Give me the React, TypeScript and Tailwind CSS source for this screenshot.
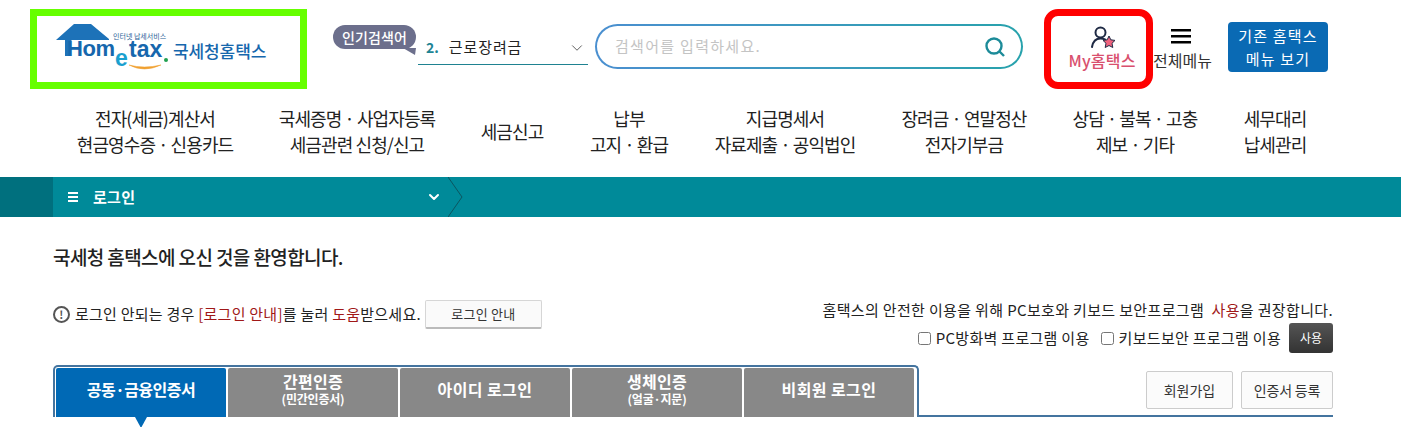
import { ChevronDown } from "lucide-react"

const font = "font-['Noto_Sans_CJK_KR','Noto_Sans',sans-serif]"

const navItems = [
  { lines: ["전자(세금)계산서", "현금영수증 · 신용카드"], w: "w-[202px]" },
  { lines: ["국세증명 · 사업자등록", "세금관련 신청/신고"], w: "w-[202px]" },
  { lines: ["세금신고"], w: "w-[108px]" },
  { lines: ["납부", "고지 · 환급"], w: "w-[126px]" },
  { lines: ["지급명세서", "자료제출 · 공익법인"], w: "w-[186px]" },
  { lines: ["장려금 · 연말정산", "전자기부금"], w: "w-[172px]" },
  { lines: ["상담 · 불복 · 고충", "제보 · 기타"], w: "w-[170px]" },
  { lines: ["세무대리", "납세관리"], w: "w-[110px]" },
]

const tabs = [
  { title: "공동·금융인증서", active: true, spacing: "tracking-[-0.5px]" },
  { title: "간편인증", sub: "(민간인증서)", spacing: "tracking-[0.3px]" },
  { title: "아이디 로그인", spacing: "tracking-[0.4px]" },
  { title: "생체인증", sub: "(얼굴·지문)", spacing: "tracking-[0.3px]" },
  { title: "비회원 로그인", spacing: "tracking-[0.4px]" },
]

function Logo() {
  return (
    <div className="flex h-20 w-[277px] shrink-0 items-center border-[7px] border-[#66ff00] bg-white">
      <div className="relative ml-[19px] h-[54px] w-[220px]">
        <svg className="absolute left-0 top-[2px]" width="54" height="32" viewBox="0 0 54 32">
          <path d="M0 16 L18 0 L35 0 L53 15 L53 16 L16 16 L14 18 L14 32 L9 32 L9 16 Z" fill="#1d72b8" />
        </svg>
        <span className="absolute left-[57px] top-[11px] text-[7px] leading-none text-[#2b5f97]">인터넷 납세서비스</span>
        <span className="absolute left-[11px] top-[15px] font-['Liberation_Sans',sans-serif] text-[22px] font-bold leading-[24px] tracking-[-0.4px] text-[#1667ad]">Hom</span>
        <span className="absolute left-[59px] top-[24px] font-['Liberation_Sans',sans-serif] text-[23px] font-bold leading-[24px] text-[#1aa0cf]">e</span>
        <span className="absolute left-[73px] top-[15px] font-['Liberation_Sans',sans-serif] text-[23px] font-bold leading-[24px] text-[#1667ad]">tax</span>
        <span className="absolute left-[108px] top-[36px] h-1 w-1 rounded-full bg-[#20a050]" />
        <svg className="absolute left-[72px] top-[42px]" width="34" height="8" viewBox="0 0 34 8">
          <path d="M1 1 Q16 9 33 1 Q16 5 1 1 Z" fill="#f0a030" stroke="#f0a030" strokeWidth="0.5" />
        </svg>
        <span className="absolute left-[117px] top-[17px] text-[17px] font-medium leading-[24px] tracking-[-0.1px] text-[#1667ad]">국세청홈택스</span>
      </div>
    </div>
  )
}

function Header() {
  return (
    <header className="flex h-[98px] items-start pl-[30px] pt-[9px]">
      <Logo />
      <div className="relative ml-[26px] mt-4 h-[28px] w-[85px] shrink-0">
        <div className="flex h-[24px] w-[83px] items-center justify-center rounded-[12px] bg-[#6c6f8c] text-[14px] font-medium leading-none tracking-[0.1px] text-white">인기검색어</div>
        <svg className="absolute left-[70px] top-[23px]" width="13" height="7" viewBox="0 0 13 7">
          <path d="M0 0 L13 0 L12 7 Z" fill="#6c6f8c" />
        </svg>
      </div>
      <div className="mt-[22px] flex h-[34px] w-[170px] shrink-0 items-center border-b border-[#1f8291] pl-2 pr-[2px] text-[15px] text-[#222]">
        <b className="mr-[10px] text-[14px] text-[#1d8494]">2.</b>
        <span className="tracking-[0.9px]">근로장려금</span>
        <ChevronDown className="ml-auto h-[18px] w-[18px] text-[#555]" strokeWidth={1.25} />
      </div>
      <div className="ml-[7px] mt-[15px] h-[45px] w-[428px] shrink-0 rounded-full bg-gradient-to-r from-[#4a8fd0] to-[#27a2ac] p-[2px]">
        <div className="flex h-full items-center rounded-full bg-white pl-[18px] pr-[15px]">
          <span className="text-[15px] tracking-[1.3px] text-[#c4c4c4]">검색어를 입력하세요.</span>
          <svg className="ml-auto" width="22" height="22" viewBox="0 0 22 22" fill="none" stroke="#1c8b99">
            <circle cx="10" cy="10" r="7.5" strokeWidth="2.4" />
            <path d="M15.5 15.5 L20 20" strokeWidth="2.4" />
          </svg>
        </div>
      </div>
      <div className="ml-[21px] flex h-20 w-[109px] shrink-0 flex-col items-center rounded-[14px] border-[7px] border-[#ff0000] bg-white pt-[10px]">
        <svg width="32" height="24" viewBox="0 0 32 24" fill="none">
          <circle cx="17.5" cy="6.5" r="5" stroke="#1f2a44" strokeWidth="2" />
          <path d="M9 21 C10 15 13.5 12.5 17.5 12.5 C19.5 12.5 21 13 22 13.5" stroke="#1f2a44" strokeWidth="2" strokeLinecap="round" />
          <path d="M27 10 L28.8 13.8 L33 14.4 L30 17.3 L30.8 21.5 L27 19.5 L23.2 21.5 L24 17.3 L21 14.4 L25.2 13.8 Z" transform="translate(-1 0)" fill="#f0637e" stroke="#1f2a44" strokeWidth="1" />
        </svg>
        <span className="ml-[7px] text-[16px] font-medium leading-[20px] tracking-[0.2px] text-[#d9506e]">My홈택스</span>
      </div>
      <div className="flex w-[59px] shrink-0 flex-col items-center pt-[20px]">
        <svg className="mr-[3px]" width="20" height="15" viewBox="0 0 20 15" fill="#000">
          <rect y="0" width="20" height="2.5" />
          <rect y="6" width="20" height="2.5" />
          <rect y="12" width="20" height="2.5" />
        </svg>
        <span className="mt-[6px] whitespace-nowrap text-[16px] leading-[20px] text-[#333]">전체메뉴</span>
      </div>
      <div className="ml-4 mt-[13px] flex h-[50px] w-[100px] shrink-0 flex-col items-center justify-center rounded-[4px] bg-[#0a6ab4] text-[15px] leading-[23px] tracking-[1.2px] text-white">
        <span>기존 홈택스</span>
        <span>메뉴 보기</span>
      </div>
    </header>
  )
}

function Nav() {
  return (
    <nav className="flex h-[79px] items-center pb-[13px] pl-[54px]">
      {navItems.map((item) => (
        <div key={item.lines[0]} className={`${item.w} shrink-0 whitespace-nowrap text-center text-[18px] leading-[26px] tracking-[-0.9px] text-[#222]`}>
          {item.lines.map((line) => (
            <div key={line}>{line}</div>
          ))}
        </div>
      ))}
    </nav>
  )
}

function LocationBar() {
  return (
    <div className="flex h-10 bg-[#008a99]">
      <div className="w-[53px] bg-[#00707e]" />
      <div className="flex w-[395px] items-center pl-[15px] pr-[6px] text-white">
        <span className="flex w-[10px] flex-col gap-[2px]">
          <i className="h-[2px] bg-white" />
          <i className="h-[2px] bg-white" />
          <i className="h-[2px] bg-white" />
        </span>
        <span className="ml-[15px] text-[15px] font-bold tracking-[0.3px]">로그인</span>
        <ChevronDown className="ml-auto h-4 w-4" strokeWidth={3} />
      </div>
      <svg width="15" height="40" viewBox="0 0 15 40" fill="none">
        <path d="M0 0 L14 20 L0 40" stroke="#0b5560" strokeWidth="1" />
      </svg>
    </div>
  )
}

function Notice() {
  return (
    <div className="mt-[29px] flex h-[53px] items-start justify-between">
      <div className="flex items-center text-[15px] tracking-[0.25px] text-[#222]">
        <span className="mr-[5px] flex h-[17px] w-[17px] items-center justify-center rounded-full border-2 border-[#555] text-[11px] font-bold leading-none text-[#555]">!</span>
        <span>로그인 안되는 경우 <span className="text-[#a01818]">[로그인 안내]</span>를 눌러 <span className="text-[#a01818]">도움</span>받으세요.</span>
        <button className="ml-[4px] h-[29px] w-[117px] rounded-[2px] border border-[#d6d6d6] border-b-2 border-b-[#bbb] bg-[#fafafa] text-[13px] text-[#333]">로그인 안내</button>
      </div>
      <div className="flex flex-col items-end text-[15px] text-[#222]">
        <div className="h-[23px] leading-[20px] tracking-[0.35px]">홈택스의 안전한 이용을 위해 PC보호와 키보드 보안프로그램 &nbsp;<span className="text-[#a01818]">사용</span>을 권장합니다.</div>
        <div className="flex items-center tracking-[0.3px]">
          <input type="checkbox" className="mr-[5px] h-[13px] w-[13px]" readOnly />
          <span>PC방화벽 프로그램 이용</span>
          <input type="checkbox" className="ml-[11px] mr-[5px] h-[13px] w-[13px]" readOnly />
          <span>키보드보안 프로그램 이용</span>
          <button className="ml-[8px] h-[30px] w-11 rounded-[3px] bg-gradient-to-b from-[#555] to-[#333] text-[12px] tracking-normal text-white">사용</button>
        </div>
      </div>
    </div>
  )
}

function Tabs() {
  return (
    <div className="mt-[12px] flex h-[52px] items-stretch">
      <div className="flex h-[52px] w-[866px] shrink-0 gap-[2px] rounded-t-[5px] border-x-2 border-t-2 border-[#44749f] pl-[1px] pt-[1px]">
        {tabs.map((tab) => (
          <div
            key={tab.title}
            className={`relative flex h-[49px] w-[170px] flex-col items-center justify-center rounded-t-[2px] pb-2 font-bold text-white ${tab.active ? "bg-[#0069b5]" : "bg-[#888888]"}`}
          >
            <span className={`text-[16px] leading-[20px] ${tab.spacing}`}>{tab.title}</span>
            {tab.sub && <span className="text-[12px] leading-[16px] tracking-[-0.2px]">{tab.sub}</span>}
            {tab.active && (
              <span className="absolute left-[79px] top-full h-0 w-0 border-x-[6px] border-t-[11px] border-x-transparent border-t-[#0069b5]" />
            )}
          </div>
        ))}
      </div>
      <div className="flex flex-1 justify-end gap-2 border-b-2 border-[#44749f] pt-[6px]">
        <button className="h-[38px] w-[87px] rounded-[2px] border border-[#ccc] bg-[#fbfbfb] text-[14px] text-[#333]">회원가입</button>
        <button className="h-[38px] w-[92px] rounded-[2px] border border-[#ccc] bg-[#fbfbfb] text-[14px] tracking-[-0.2px] text-[#333]">인증서 등록</button>
      </div>
    </div>
  )
}

export default function App() {
  return (
    <div className={`h-[427px] w-[1401px] overflow-hidden bg-white ${font}`}>
      <Header />
      <Nav />
      <LocationBar />
      <main className="pl-[53px] pr-[68px]">
        <h1 className="mt-[26px] h-[28px] text-[19px] font-medium leading-[28px] tracking-[-0.6px] text-[#222]">국세청 홈택스에 오신 것을 환영합니다.</h1>
        <Notice />
        <Tabs />
      </main>
    </div>
  )
}
